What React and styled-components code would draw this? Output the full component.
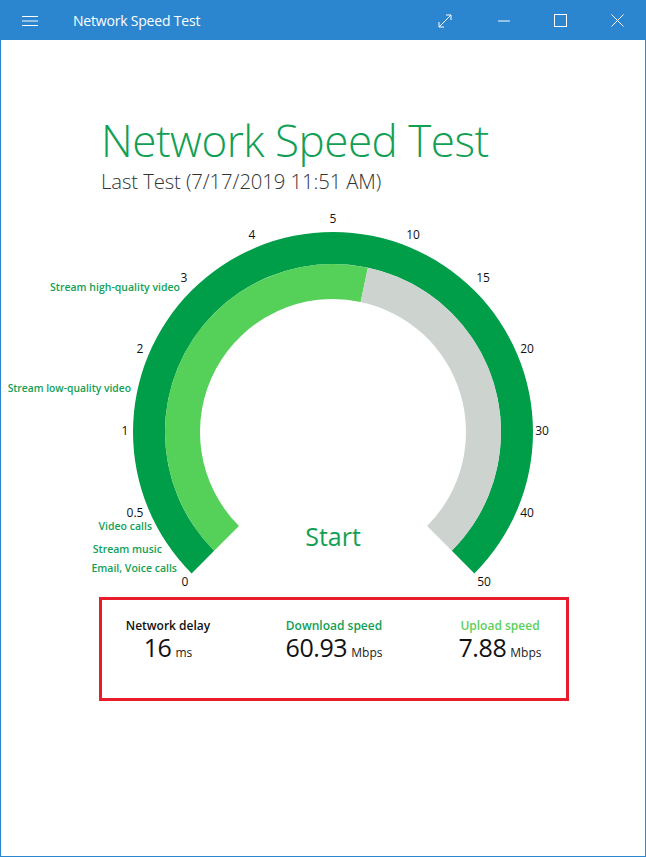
import React from 'react';
import styled, { createGlobalStyle } from 'styled-components';

const GlobalStyle = createGlobalStyle`
  html, body { margin: 0; padding: 0; background: #fff; }
  body { font-family: "Open Sans", "Noto Sans", sans-serif; }
`;

const DARK = '#009e49';
const LIGHT = '#55d15a';
const GRAY = '#cdd3cf';
const TEXT_GREEN = '#13a055';

const Window = styled.div`
  width: 646px;
  height: 857px;
  box-sizing: border-box;
  border: 1px solid #2b86cf;
  display: flex;
  flex-direction: column;
  background: #fff;
  overflow: hidden;
`;

const TitleBar = styled.div`
  height: 39px;
  background: #2b86cf;
  display: flex;
  align-items: center;
  color: #fff;
  flex-shrink: 0;
  padding-right: 5px;
`;

const BarButton = styled.div`
  width: ${(p) => p.$w || 46}px;
  height: 39px;
  display: flex;
  align-items: center;
  justify-content: center;
`;

const AppTitle = styled.div`
  font-family: "Open Sans", sans-serif;
  font-size: 14px;
  letter-spacing: -0.2px;
  margin-left: 14px;
  flex: 1;
`;

const Header = styled.div`
  padding: 75px 0 0 100px;
`;

const BigTitle = styled.h1`
  margin: 0;
  font-family: "Open Sans", sans-serif;
  font-weight: 300;
  font-size: 44px;
  line-height: 51px;
  color: ${TEXT_GREEN};
  letter-spacing: -0.5px;
`;

const SubTitle = styled.div`
  margin-top: 2px;
  font-family: "Open Sans", sans-serif;
  font-weight: 300;
  font-size: 20.3px;
  line-height: 26px;
  color: #333;
  letter-spacing: -0.1px;
`;

const GaugeSvg = styled.svg`
  display: block;
  margin-top: 6px;
`;

const StatsBox = styled.div`
  margin-left: 98px;
  margin-top: 5px;
  width: 470px;
  height: 104px;
  box-sizing: border-box;
  border: 3px solid #e81c2a;
  display: grid;
  grid-template-columns: repeat(3, 166px);
  justify-content: center;
  align-content: start;
  padding-top: 18px;
`;

const Stat = styled.div`
  display: flex;
  flex-direction: column;
  align-items: center;
`;

const StatLabel = styled.div`
  font-family: "Open Sans", sans-serif;
  font-weight: 600;
  font-size: 12px;
  line-height: 16px;
  color: ${(p) => p.$color};
`;

const StatValue = styled.div`
  font-family: "Open Sans", sans-serif;
  font-size: 25px;
  line-height: 26px;
  color: #111;
  letter-spacing: -0.4px;
`;

const Unit = styled.span`
  font-size: 12px;
  margin-left: 4px;
  letter-spacing: 0;
  color: #222;
`;

const CX = 332;
const CY = 232;

function pt(r, deg) {
  const a = (deg * Math.PI) / 180;
  return [CX + r * Math.sin(a), CY - r * Math.cos(a)];
}

function band(r1, r2, a1, a2) {
  const large = a2 - a1 > 180 ? 1 : 0;
  const [x1, y1] = pt(r2, a1);
  const [x2, y2] = pt(r2, a2);
  const [x3, y3] = pt(r1, a2);
  const [x4, y4] = pt(r1, a1);
  return `M${x1} ${y1} A${r2} ${r2} 0 ${large} 1 ${x2} ${y2} L${x3} ${y3} A${r1} ${r1} 0 ${large} 0 ${x4} ${y4} Z`;
}

const ticks = [
  ['0', 184, 381], ['0.5', 134, 312], ['1', 124, 230], ['2', 139, 148],
  ['3', 183, 77], ['4', 251, 34], ['5', 332, 18], ['10', 412, 34],
  ['15', 482, 77], ['20', 526, 148], ['30', 541, 230], ['40', 526, 312],
  ['50', 483, 381],
];

const uses = [
  ['Stream high-quality video', 179, 87, 10.5],
  ['Stream low-quality video', 130, 188, 10.3],
  ['Video calls', 151, 326, 10.5],
  ['Stream music', 161, 349, 10.5],
  ['Email, Voice calls', 176, 368, 10.5],
];

function Gauge() {
  const value = 12;
  return (
    <GaugeSvg width="644" height="392" viewBox="0 0 644 392">
      <path d={band(168, 200, -135, 135)} fill={DARK} />
      <path d={band(133, 168, -135, value)} fill={LIGHT} />
      <path d={band(133, 168, value, 135)} fill={GRAY} />
      {ticks.map(([t, x, y]) => (
        <text key={t} x={x} y={y} textAnchor="middle" dominantBaseline="central"
          fontFamily="Open Sans, sans-serif" fontSize="12" fill="#111">{t}</text>
      ))}
      {uses.map(([t, x, y, s]) => (
        <text key={t} x={x} y={y} textAnchor="end" dominantBaseline="central"
          fontFamily="Open Sans, sans-serif" fontSize={s} fontWeight="600" fill={TEXT_GREEN}>{t}</text>
      ))}
      <text x={CX} y={336} textAnchor="middle" dominantBaseline="central"
        fontFamily="Open Sans, sans-serif" fontSize="25" fill={TEXT_GREEN}>Start</text>
    </GaugeSvg>
  );
}

const Hamburger = () => (
  <svg width="16" height="12" viewBox="0 0 16 12">
    <path d="M0 1.5H16M0 6H16M0 10.5H16" stroke="#fff" strokeWidth="1" />
  </svg>
);

const Expand = () => (
  <svg width="14" height="14" viewBox="0 0 14 14" fill="none" stroke="#fff" strokeWidth="1">
    <path d="M1 13L13 1M8 1H13V6M1 8V13H6" />
  </svg>
);

const Minimize = () => (
  <svg width="12" height="2" viewBox="0 0 12 2">
    <path d="M0 1H12" stroke="#fff" strokeWidth="1" />
  </svg>
);

const Maximize = () => (
  <svg width="13" height="13" viewBox="0 0 13 13">
    <rect x="0.5" y="0.5" width="12" height="12" fill="none" stroke="#fff" strokeWidth="1" />
  </svg>
);

const Close = () => (
  <svg width="13" height="13" viewBox="0 0 13 13">
    <path d="M0.5 0.5L12.5 12.5M12.5 0.5L0.5 12.5" stroke="#fff" strokeWidth="1" />
  </svg>
);

export default function App() {
  return (
    <>
      <GlobalStyle />
      <Window>
        <TitleBar>
          <BarButton $w={58}><Hamburger /></BarButton>
          <AppTitle>Network Speed Test</AppTitle>
          <BarButton><Expand /></BarButton>
          <BarButton $w={13} />
          <BarButton><Minimize /></BarButton>
          <BarButton $w={10} />
          <BarButton><Maximize /></BarButton>
          <BarButton $w={11} />
          <BarButton><Close /></BarButton>
        </TitleBar>
        <Header>
          <BigTitle>Network Speed Test</BigTitle>
          <SubTitle>Last Test (7/17/2019 11:51 AM)</SubTitle>
        </Header>
        <Gauge />
        <StatsBox>
          <Stat>
            <StatLabel $color="#111">Network delay</StatLabel>
            <StatValue>16<Unit>ms</Unit></StatValue>
          </Stat>
          <Stat>
            <StatLabel $color={TEXT_GREEN}>Download speed</StatLabel>
            <StatValue>60.93<Unit>Mbps</Unit></StatValue>
          </Stat>
          <Stat>
            <StatLabel $color="#5ccf5a">Upload speed</StatLabel>
            <StatValue>7.88<Unit>Mbps</Unit></StatValue>
          </Stat>
        </StatsBox>
      </Window>
    </>
  );
}
